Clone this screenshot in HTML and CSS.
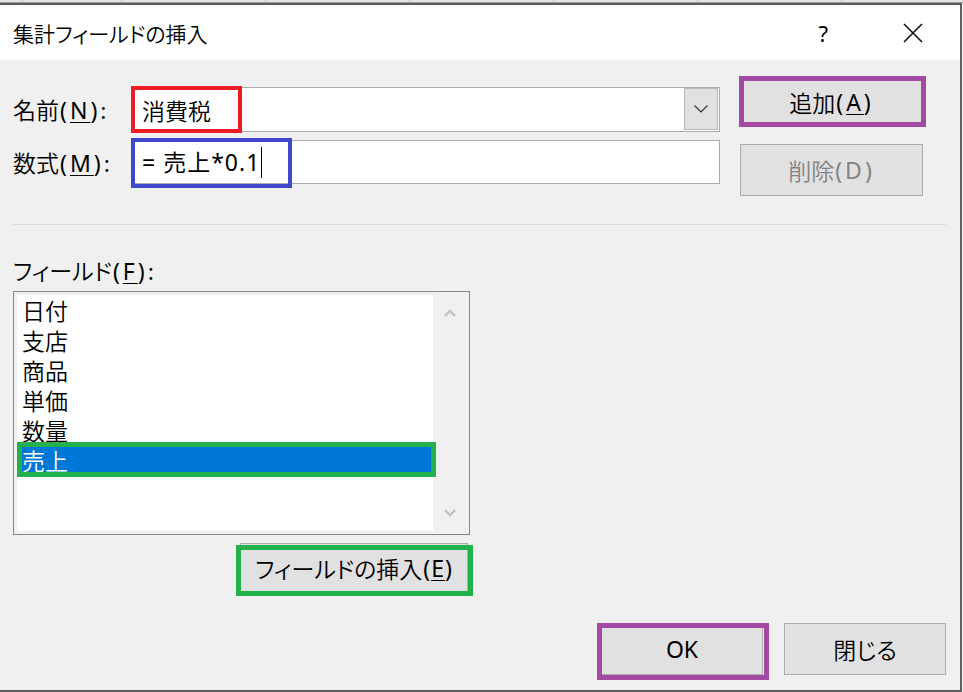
FILE: index.html
```html
<!DOCTYPE html>
<html lang="ja">
<head>
    <meta charset="UTF-8">
    <title>集計フィールドの挿入</title>
    <link rel="stylesheet" href="styles.css">
</head>
<body>
    <div class="sheet"></div>
    <div class="dialog">
        <div class="titlebar">
            <span class="title">集計フィールドの挿入</span>
            <span class="help">?</span>
            <span class="close">
                <svg width="20" height="20" viewBox="0 0 20 20"><path d="M1 1 L19 19 M19 1 L1 19" stroke="#111" stroke-width="1.6" fill="none"/></svg>
            </span>
        </div>

        <div class="content">
            <div class="top">
                <div class="fields">
                    <div class="row row-name">
                        <span class="label">名前<span class="key">(<u>N</u>)</span>:</span>
                        <div class="textbox combo">
                            <span class="value">消費税</span>
                            <span class="drop">
                                <svg width="14" height="8" viewBox="0 0 14 8"><path d="M0.5 0.5 L7 7 L13.5 0.5" stroke="#333" stroke-width="1.2" fill="none"/></svg>
                            </span>
                            <span class="mark mark-red"></span>
                        </div>
                    </div>
                    <div class="row row-formula">
                        <span class="label">数式<span class="key">(<u>M</u>)</span>:</span>
                        <div class="textbox">
                            <span class="value formula">= 売上*0.1</span><span class="caret"></span>
                            <span class="mark mark-blue"></span>
                        </div>
                    </div>
                </div>
                <div class="actions">
                    <div class="btn btn-add">追加<span class="key">(<u>A</u>)</span><span class="mark mark-purple-add"></span></div>
                    <div class="btn btn-delete disabled">削除<span class="key">(D)</span></div>
                </div>
            </div>

            <div class="separator"></div>

            <div class="list-label">フィールド<span class="key">(<u>F</u>)</span>:</div>
            <div class="listbox">
                <div class="items">
                    <div class="item">日付</div>
                    <div class="item">支店</div>
                    <div class="item">商品</div>
                    <div class="item">単価</div>
                    <div class="item">数量</div>
                    <div class="item selected">売上<span class="mark mark-green-item"></span></div>
                </div>
                <div class="scroll">
                    <svg width="12" height="8" viewBox="0 0 12 8"><path d="M1 7 L6 1.8 L11 7" stroke="#c2c2c2" stroke-width="2.4" fill="none"/></svg>
                    <svg width="12" height="8" viewBox="0 0 12 8"><path d="M1 1 L6 6.2 L11 1" stroke="#c2c2c2" stroke-width="2.4" fill="none"/></svg>
                </div>
            </div>

            <div class="btn btn-insert">フィールドの挿入<span class="key small">(<u>E</u>)</span><span class="mark mark-green-btn"></span></div>

            <div class="footer">
                <div class="btn btn-ok">OK<span class="mark mark-purple-ok"></span></div>
                <div class="btn btn-close">閉じる</div>
            </div>
        </div>
    </div>
</body>
</html>
```

FILE: styles.css
```css
body {
    margin: 0;
    background-color: #f3f3f3;
    font-family: "Noto Sans CJK JP", "Noto Sans", sans-serif;
    font-weight: 350;
    font-feature-settings: "palt";
    color: #000;
    width: 963px;
    height: 692px;
    overflow: hidden;
}
u {
    text-decoration-thickness: 1px;
    text-underline-offset: 3px;
}
.sheet {
    height: 2px;
    border-bottom: 1px solid #9e9e9e;
    background-color: #e4e4e4;
    background-image: repeating-linear-gradient(to right, #c4c4c4 0 1px, transparent 1px 144px);
    background-position: 121px 0;
}
.dialog {
    width: 960px;
    height: 685px;
    border-top: 2px solid #5a5a5a;
    border-right: 2px solid #606060;
    border-bottom: 2px solid #5a5a5a;
    background: #f0f0f0;
}
.titlebar {
    height: 55px;
    background: #fff;
    display: flex;
    align-items: center;
    padding-left: 13px;
}
.title {
    font-size: 21px;
    line-height: 28px;
}
.help {
    margin-left: auto;
    margin-right: 75px;
    font-size: 22px;
    line-height: 28px;
    font-family: "Noto Sans", sans-serif;
    font-weight: 400;
}
.close {
    display: flex;
    margin-right: 37px;
}
.content {
    padding: 0 14px 0 13px;
    font-size: 23px;
}
.top {
    display: flex;
}
.fields {
    width: 707px;
}
.row {
    display: flex;
    align-items: center;
}
.row-name {
    margin-top: 27px;
    height: 45px;
}
.row-formula {
    margin-top: 8px;
    height: 44px;
}
.label {
    width: 120px;
    line-height: 30px;
}
.key {
    font-family: "Noto Sans", sans-serif;
    font-weight: 400;
    margin-left: 1px;
    letter-spacing: 3px;
}
.key.small {
    letter-spacing: 1px;
}
.textbox {
    position: relative;
    box-sizing: border-box;
    width: 587px;
    height: 100%;
    border: 1px solid #ababab;
    background: #fff;
    display: flex;
    align-items: center;
    padding-left: 8px;
}
.value {
    line-height: 30px;
    white-space: pre;
}
.formula {
    font-family: "Noto Sans", "Noto Sans CJK JP", sans-serif;
    font-weight: 400;
    letter-spacing: 1px;
}
.caret {
    display: inline-block;
    width: 1px;
    height: 31px;
    background: #000;
    margin-left: 1px;
}
.drop {
    box-sizing: border-box;
    margin: 0 1px 1px auto;
    align-self: stretch;
    width: 34px;
    background: #e1e1e1;
    border: 1px solid #b9b9b9;
    display: flex;
    align-items: center;
    justify-content: center;
}
.actions {
    margin-left: 20px;
    width: 183px;
}
.btn {
    position: relative;
    box-sizing: border-box;
    background: #e1e1e1;
    border: 1px solid #adadad;
    display: flex;
    align-items: center;
    justify-content: center;
    line-height: 30px;
}
.btn-add {
    margin-top: 16px;
    height: 51px;
}
.btn-delete {
    margin-top: 17px;
    height: 52px;
}
.disabled {
    color: #838383;
}
.separator {
    margin-top: 28px;
    height: 1px;
    background: #dadada;
}
.list-label {
    margin-top: 30px;
    height: 30px;
    line-height: 30px;
}
.listbox {
    margin-top: 6px;
    box-sizing: border-box;
    width: 457px;
    height: 244px;
    border: 1px solid #828790;
    padding: 3px;
    display: flex;
}
.items {
    width: 416px;
    background: #fff;
}
.item {
    position: relative;
    height: 30px;
    line-height: 30px;
    padding-left: 5px;
}
.selected {
    background: #0078d7;
    color: #fff;
}
.scroll {
    flex: 1;
    display: flex;
    flex-direction: column;
    align-items: center;
    justify-content: space-between;
    padding: 14px 0;
}
.btn-insert {
    margin-top: 8px;
    margin-left: 227px;
    width: 228px;
    height: 50px;
}
.footer {
    margin-top: 30px;
    display: flex;
    justify-content: flex-end;
    gap: 21px;
}
.btn-ok, .btn-close {
    width: 162px;
    height: 52px;
}
.btn-ok {
    font-family: "Noto Sans", sans-serif;
    font-weight: 400;
}

/* annotation boxes drawn over the dialog */
.mark {
    position: absolute;
    box-sizing: border-box;
    pointer-events: none;
}
.mark-red {
    left: -3px;
    top: -2px;
    width: 111px;
    height: 47px;
    border: 4px solid #ed1c24;
}
.mark-blue {
    left: -3px;
    top: -3px;
    width: 161px;
    height: 50px;
    border: 4px solid #3f48cc;
}
.mark-purple-add {
    left: -2px;
    top: -1px;
    width: 187px;
    height: 51px;
    border: 5px solid #a349a4;
}
.mark-green-item {
    left: 0;
    top: -3px;
    width: 419px;
    height: 35px;
    border: 5px solid #22b14c;
}
.mark-green-btn {
    left: -5px;
    top: 1px;
    width: 237px;
    height: 51px;
    border: 5px solid #22b14c;
}
.mark-purple-ok {
    left: -5px;
    top: -1px;
    width: 172px;
    height: 57px;
    border: 5px solid #a349a4;
}
```
